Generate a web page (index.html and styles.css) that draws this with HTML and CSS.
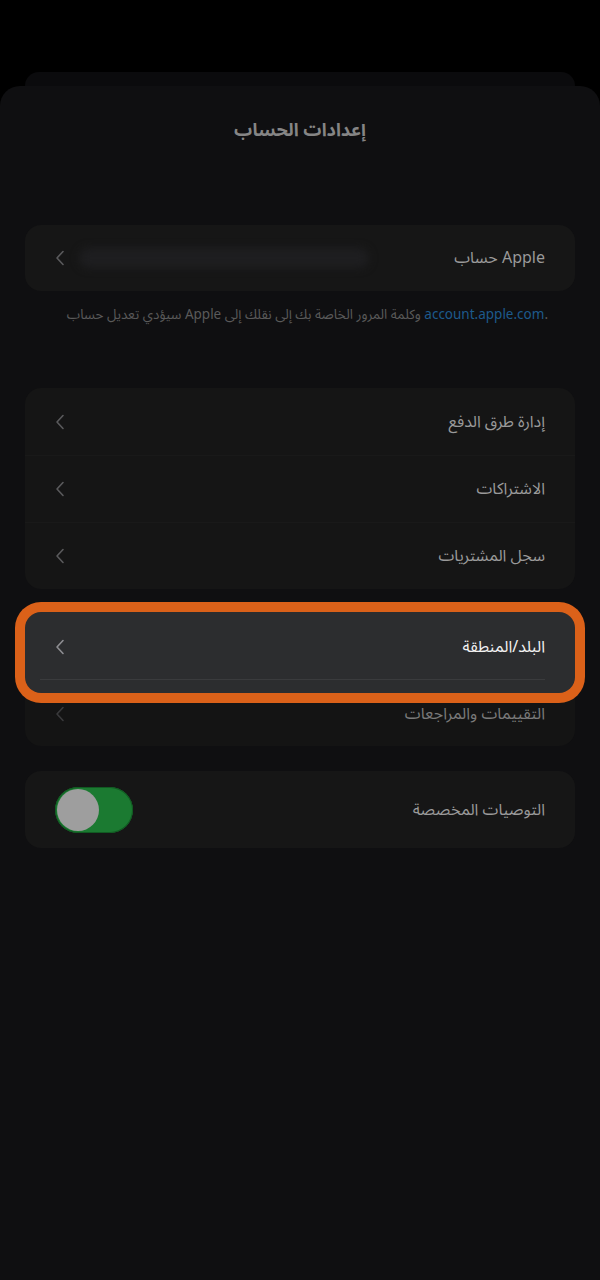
FILE: index.html
```html
<!DOCTYPE html>
<html lang="ar" dir="rtl">
<head>
    <meta charset="UTF-8">
    <title>إعدادات الحساب</title>
    <meta name="viewport" content="width=device-width, initial-scale=1.0, user-scalable=no">
    <link rel="stylesheet" href="styles.css">
</head>
<body>
    <div class="back-sheet"></div>
    <div class="sheet">
        <h1 class="title">إعدادات الحساب</h1>

        <div class="card">
            <div class="row">
                <span class="label"><span dir="ltr">حساب Apple</span></span>
                <span class="blur"></span>
                <svg class="chev" viewBox="0 0 10 16"><path d="M8 1.5L2 8l6 6.5"/></svg>
            </div>
        </div>
        <p class="note" dir="ltr">سيؤدي تعديل حساب Apple وكلمة المرور الخاصة بك إلى نقلك إلى <a href="#">account.apple.com</a>.</p>

        <div class="card group">
            <div class="row">
                <span class="label">إدارة طرق الدفع</span>
                <svg class="chev" viewBox="0 0 10 16"><path d="M8 1.5L2 8l6 6.5"/></svg>
            </div>
            <div class="row">
                <span class="label">الاشتراكات</span>
                <svg class="chev" viewBox="0 0 10 16"><path d="M8 1.5L2 8l6 6.5"/></svg>
            </div>
            <div class="row">
                <span class="label">سجل المشتريات</span>
                <svg class="chev" viewBox="0 0 10 16"><path d="M8 1.5L2 8l6 6.5"/></svg>
            </div>
        </div>

        <div class="card region">
            <div class="hilite">
                <div class="row">
                    <span class="label">البلد/المنطقة</span>
                    <svg class="chev" viewBox="0 0 10 16"><path d="M8 1.5L2 8l6 6.5"/></svg>
                </div>
                <div class="line"></div>
            </div>
            <div class="row under">
                <span class="label">التقييمات والمراجعات</span>
                <svg class="chev" viewBox="0 0 10 16"><path d="M8 1.5L2 8l6 6.5"/></svg>
            </div>
        </div>

        <div class="card">
            <div class="row tall">
                <span class="label">التوصيات المخصصة</span>
                <span class="toggle"><span class="knob"></span></span>
            </div>
        </div>
    </div>
</body>
</html>
```

FILE: styles.css
```css
html,body{margin:0;padding:0;background:#000;}
body{
    font-family:"Noto Sans Arabic","Noto Sans","DejaVu Sans",sans-serif;
    color:#9a9a9a;
}
.back-sheet{
    margin:72px 25px 0;
    height:14px;
    background:#0b0b0d;
    border-radius:20px 20px 0 0;
}
.sheet{
    background:#0f0f11;
    border-radius:20px 20px 0 0;
    min-height:1194px;
    padding:1px 25px 0;
    box-sizing:border-box;
}
.title{
    margin:29px 0 0;
    font-size:18px;
    line-height:28px;
    font-weight:bold;
    text-align:center;
    color:#858585;
}
.card{
    background:#161616;
    border-radius:16px;
    margin-top:81px;
}
.row{
    display:flex;
    align-items:center;
    height:66px;
    padding:0 30px;
    gap:14px;
}
.label{
    flex:1;
    font-size:16px;
    white-space:nowrap;
}
.chev{
    width:10px;
    height:16px;
    fill:none;
    stroke:#5a5a5c;
    stroke-width:1.6;
    stroke-linecap:round;
    stroke-linejoin:round;
}
.blur{
    width:290px;
    height:20px;
    border-radius:10px;
    background:#1e1e20;
    filter:blur(4px);
}
.note{
    margin:15px 27px 0 0;
    font-size:13.5px;
    line-height:18px;
    text-align:right;
    color:#5a5a5a;
    white-space:nowrap;
}
.note a{color:#1d5a8c;text-decoration:none;}

.group{margin-top:64px;background:#151515;}
.group .row{border-top:1px solid #191919;}
.group .row:first-child{border-top:0;height:67px;}

.region{margin-top:23px;background:#141414;}
.hilite{
    background:#2c2d2f;
    border-radius:16px;
    box-shadow:0 0 0 10px #db6119;
    height:81px;
}
.hilite .row{height:70px;}
.hilite .label{color:#f2f2f2;}
.hilite .chev{stroke:#8e8e92;}
.line{
    height:1px;
    background:#3a3b3d;
    margin:-3px 30px 0 15px;
}
.under{height:42px;padding:0 30px 11px;}
.under .label{color:#7a7a7a;}
.under .chev{stroke:#3a3a3c;}

.card:last-child{margin-top:25px;}
.tall{height:77px;}
.toggle{
    width:78px;
    height:46px;
    border-radius:23px;
    background:#1b7a31;
    box-shadow:inset 0 0 0 1px #115a22;
    display:flex;
    align-items:center;
    justify-content:flex-end;
    padding:0 2px;
    box-sizing:border-box;
}
.knob{
    width:42px;
    height:42px;
    border-radius:50%;
    background:#9e9e9e;
}
```
